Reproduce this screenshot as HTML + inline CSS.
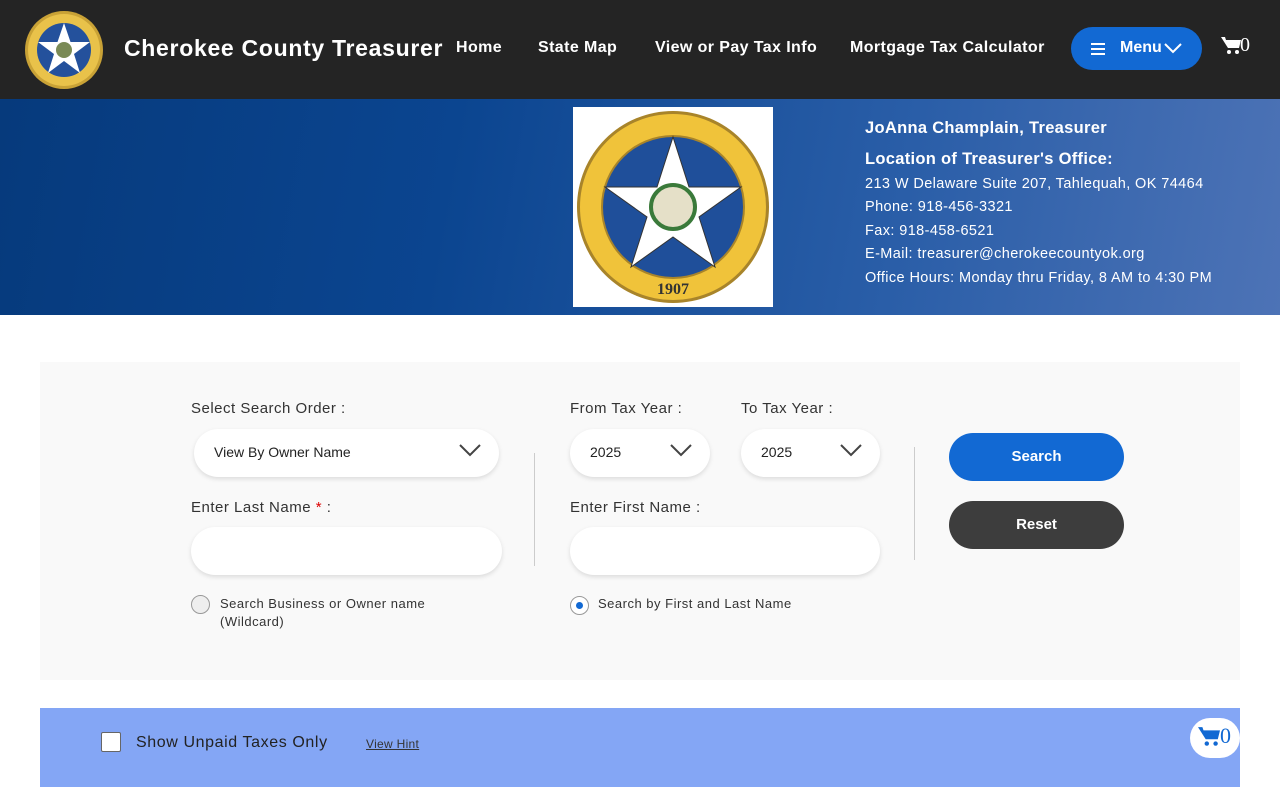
<!DOCTYPE html>
<html><head><meta charset="utf-8"><style>
*{box-sizing:border-box;margin:0;padding:0}
body{width:1280px;height:800px;overflow:hidden;background:#fff;font-family:"Liberation Sans",sans-serif;}
.top{height:99px;background:#242424;position:relative;color:#fff}
.top .t{position:absolute;left:124px;top:35px;font-size:23px;font-weight:bold;letter-spacing:.7px}
.nav{position:absolute;top:39px;font-size:16px;font-weight:bold;letter-spacing:.4px}
.menu{position:absolute;left:1071px;top:27px;width:131px;height:43px;border-radius:22px;background:#1269d3;font-weight:bold;font-size:16px}
.banner{position:absolute;top:99px;left:0;width:1280px;height:216px;background:linear-gradient(100deg,#063a7c 0%,#0b4590 35%,#2a5ea8 70%,#4d73b6 100%);color:#fff}
.info{position:absolute;left:865px;font-size:14.5px;letter-spacing:.4px}
.panel{position:absolute;left:40px;top:362px;width:1200px;height:318px;background:#f9f9f9}
.lbl{position:absolute;font-size:15px;color:#333;letter-spacing:.5px}
.inp{position:absolute;background:#fff;border-radius:24px;box-shadow:0 2px 5px rgba(0,0,0,.12);font-size:14px;color:#222}
.chev{position:absolute;right:18px;top:14px}
.btn{position:absolute;left:949px;width:175px;height:48px;border-radius:24px;color:#fff;font-weight:bold;font-size:15px;text-align:center;line-height:48px}
.rad{position:absolute;width:19px;height:19px;border-radius:50%;border:1px solid #999;background:#eee}
.small{position:absolute;font-size:13px;color:#333;line-height:18px;letter-spacing:.5px}
.bar{position:absolute;left:40px;top:708px;width:1200px;height:79px;background:#84a6f5}
</style></head><body>
<div class="top">
<svg style="position:absolute;left:24px;top:10px" width="80" height="80" viewBox="0 0 80 80"><circle cx="40" cy="40" r="39" fill="#c9a236"/><circle cx="40" cy="40" r="36" fill="#e9c24a"/><circle cx="40" cy="40" r="27" fill="#24519c"/><polygon points="40,13 46.5,32 66,32 50,44 56,63 40,51 24,63 30,44 14,32 33.5,32" fill="#fff"/><circle cx="40" cy="40" r="8" fill="#7a8a55"/></svg>
<div class="t">Cherokee County Treasurer</div>
<div class="nav" style="left:456px">Home</div>
<div class="nav" style="left:538px">State Map</div>
<div class="nav" style="left:655px">View or Pay Tax Info</div>
<div class="nav" style="left:850px">Mortgage Tax Calculator</div>
<div class="menu"><svg style="position:absolute;left:20px;top:16px" width="14" height="12"><rect y="0" width="14" height="2" fill="#fff"/><rect y="5" width="14" height="2" fill="#fff"/><rect y="10" width="14" height="2" fill="#fff"/></svg><span style="position:absolute;left:49px;top:12px">Menu</span><svg style="position:absolute;left:93px;top:15px" width="18" height="12"><path d="M1 2 L9 10 L17 2" stroke="#fff" stroke-width="2" fill="none"/></svg></div>
<svg style="position:absolute;left:1221px;top:37px" width="20" height="18" viewBox="0 0 20 18"><path d="M0 0h4l1 3h15l-2 8H7z" fill="#fff"/><circle cx="8" cy="15" r="2" fill="#fff"/><circle cx="16" cy="15" r="2" fill="#fff"/></svg>
<span style="position:absolute;left:1240px;top:34px;font-family:'Liberation Serif',serif;font-size:20px">0</span>
</div>
<div class="banner">
<div style="position:absolute;left:573px;top:8px;width:200px;height:200px;background:#fff">
<svg width="200" height="200" viewBox="0 0 200 200"><circle cx="100" cy="100" r="96" fill="#a8842a"/><circle cx="100" cy="100" r="93" fill="#f0c33a"/><circle cx="100" cy="100" r="72" fill="#a8842a"/><circle cx="100" cy="100" r="70" fill="#1f4f9a"/><polygon points="100,30 116,80 168,80 126,110 142,160 100,130 58,160 74,110 32,80 84,80" fill="#fff" stroke="#333"/><circle cx="100" cy="100" r="22" fill="#e5e0c8" stroke="#3a7a3a" stroke-width="4"/><text x="100" y="187" text-anchor="middle" font-family="Liberation Serif" font-size="16" font-weight="bold" fill="#333">1907</text></svg></div>
<div class="info" style="top:20px;font-size:16.5px;font-weight:bold;letter-spacing:.3px">JoAnna Champlain, Treasurer</div>
<div class="info" style="top:51px;font-size:16.5px;font-weight:bold;letter-spacing:.3px">Location of Treasurer's Office:</div>
<div class="info" style="top:77px">213 W Delaware Suite 207, Tahlequah, OK 74464</div>
<div class="info" style="top:100px">Phone: 918-456-3321</div>
<div class="info" style="top:124px">Fax: 918-458-6521</div>
<div class="info" style="top:147px">E-Mail: treasurer@cherokeecountyok.org</div>
<div class="info" style="top:171px">Office Hours: Monday thru Friday, 8 AM to 4:30 PM</div>
</div>
<div class="panel"></div>
<div class="lbl" style="left:191px;top:400px">Select Search Order :</div>
<div class="lbl" style="left:570px;top:400px">From Tax Year :</div>
<div class="lbl" style="left:741px;top:400px">To Tax Year :</div>
<div class="inp" style="left:194px;top:429px;width:305px;height:48px"><span style="position:absolute;left:20px;top:15px">View By Owner Name</span><svg class="chev" width="22" height="14"><path d="M1 2l10 10 10-10" stroke="#444" stroke-width="2" fill="none"/></svg></div>
<div class="inp" style="left:570px;top:429px;width:140px;height:48px"><span style="position:absolute;left:20px;top:15px">2025</span><svg class="chev" width="22" height="14"><path d="M1 2l10 10 10-10" stroke="#444" stroke-width="2" fill="none"/></svg></div>
<div class="inp" style="left:741px;top:429px;width:139px;height:48px"><span style="position:absolute;left:20px;top:15px">2025</span><svg class="chev" width="22" height="14"><path d="M1 2l10 10 10-10" stroke="#444" stroke-width="2" fill="none"/></svg></div>
<div style="position:absolute;left:534px;top:453px;width:1px;height:113px;background:#ccc"></div>
<div style="position:absolute;left:914px;top:447px;width:1px;height:113px;background:#ccc"></div>
<div class="lbl" style="left:191px;top:499px">Enter Last Name <span style="color:#d00">*</span> :</div>
<div class="lbl" style="left:570px;top:499px">Enter First Name :</div>
<div class="inp" style="left:191px;top:527px;width:311px;height:48px"></div>
<div class="inp" style="left:570px;top:527px;width:310px;height:48px"></div>
<div class="btn" style="top:433px;background:#1269d3">Search</div>
<div class="btn" style="top:501px;background:#3d3d3d">Reset</div>
<div class="rad" style="left:191px;top:595px"></div>
<div class="small" style="left:220px;top:595px">Search Business or Owner name<br>(Wildcard)</div>
<div class="rad" style="left:570px;top:596px;background:#fff"><div style="position:absolute;left:5px;top:5px;width:7px;height:7px;border-radius:50%;background:#1269d3"></div></div>
<div class="small" style="left:598px;top:595px">Search by First and Last Name</div>
<div class="bar">
<div style="position:absolute;left:61px;top:24px;width:20px;height:20px;background:#fff;border:1px solid #666;border-radius:2px"></div>
<div style="position:absolute;left:96px;top:26px;font-size:16px;color:#222;letter-spacing:.6px">Show Unpaid Taxes Only</div>
<div style="position:absolute;left:326px;top:29px;font-size:12px;color:#333;text-decoration:underline;letter-spacing:.3px">View Hint</div>
<div style="position:absolute;left:1150px;top:10px;width:50px;height:40px;border-radius:20px;background:#fff">
<svg style="position:absolute;left:8px;top:9px" width="22" height="20" viewBox="0 0 20 18"><path d="M0 0h4l1 3h15l-2 8H7z" fill="#1269d3"/><circle cx="8" cy="15" r="2" fill="#1269d3"/><circle cx="16" cy="15" r="2" fill="#1269d3"/></svg>
<span style="position:absolute;left:30px;top:5px;font-family:'Liberation Serif',serif;font-size:22px;color:#1269d3">0</span></div>
</div>
</body></html>
